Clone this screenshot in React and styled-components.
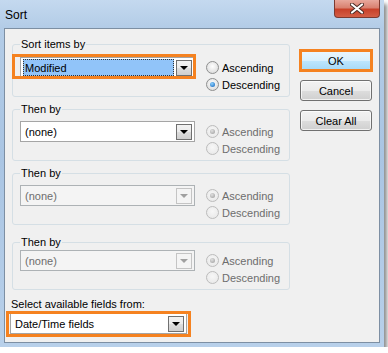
import React from "react";
import styled, { createGlobalStyle } from "styled-components";

const GlobalStyle = createGlobalStyle`
  html, body {
    margin: 0;
    padding: 0;
    background: #ffffff;
  }
  body {
    font-family: "Liberation Sans", Arial, sans-serif;
    font-size: 11px;
    color: #000;
  }
`;

const Window = styled.div`
  width: 384px;
  height: 347px;
  box-sizing: border-box;
  display: flex;
  flex-direction: column;
  padding: 0 4px 4px;
  background: linear-gradient(180deg, #c4d9ef 0%, #b3cce7 8%, #aac5e3 45%, #b8d0ea 100%);
  box-shadow: 3px 4px 4px rgba(0, 0, 0, 0.45);
`;

const TitleBar = styled.div`
  height: 28px;
  display: flex;
  justify-content: space-between;
  align-items: flex-start;
`;

const Title = styled.span`
  padding: 8px 0 0 1px;
  font-size: 12px;
`;

const CloseButton = styled.div`
  width: 46px;
  height: 18px;
  box-sizing: border-box;
  display: flex;
  align-items: center;
  justify-content: center;
  border: 1px solid #7c3a30;
  border-top: none;
  border-radius: 0 0 4px 4px;
  background: linear-gradient(180deg, #e8a89c 0%, #d98170 45%, #c8412a 55%, #d35e45 100%);
`;

const Client = styled.div`
  flex: 1;
  display: grid;
  grid-template-columns: 280px 72px;
  column-gap: 10px;
  align-items: start;
  padding: 8px 5px 0;
  background: #f0f0f0;
  border: 1px solid #7d8fa3;
`;

const LeftColumn = styled.div`
  display: flex;
  flex-direction: column;
  align-items: flex-start;
`;

const Group = styled.fieldset`
  align-self: stretch;
  margin: ${(p) => p.$gap || 0}px 0 0 2px;
  padding: ${(p) => p.$padTop}px 7px 3px;
  border: 1px solid #d5dfe5;
  border-radius: 3px;
  min-width: 0;
`;

const Legend = styled.legend`
  padding: 0 1px;
  line-height: 14px;
`;

const Row = styled.div`
  display: flex;
  align-items: flex-start;
`;

const Anchor = styled.div`
  position: relative;
`;

const Highlight = styled.div`
  position: absolute;
  top: -${(p) => p.$t}px;
  right: -${(p) => p.$r}px;
  bottom: -${(p) => p.$b}px;
  left: -${(p) => p.$l}px;
  border: 3px solid #f58220;
  pointer-events: none;
`;

const ComboBox = styled.div`
  width: ${(p) => p.$w}px;
  height: 21px;
  box-sizing: border-box;
  display: flex;
  align-items: center;
  padding: 1px 2px 1px 2px;
  background: ${(p) => (p.$disabled ? "#f4f4f4" : "#ffffff")};
  border: 1px solid ${(p) => (p.$disabled ? "#adb2b5" : "#a5a5a5")};
  color: ${(p) => (p.$disabled ? "#6d6d6d" : "#000")};
`;

const ComboText = styled.span`
  flex: 1;
  align-self: stretch;
  display: flex;
  align-items: center;
  padding-left: 2px;
  margin-right: 2px;
  background: ${(p) => (p.$selected ? "#91c4f9" : "transparent")};
  outline: ${(p) => (p.$selected ? "1px dotted #333" : "none")};
  outline-offset: -1px;
`;

const DropButton = styled.span`
  width: 16px;
  height: 16px;
  box-sizing: border-box;
  display: flex;
  align-items: center;
  justify-content: center;
  border: 1px solid ${(p) => (p.$disabled ? "#c4c4c4" : "#707070")};
  background: ${(p) =>
    p.$disabled
      ? "#f4f4f4"
      : "linear-gradient(180deg, #f2f2f2 0%, #ebebeb 50%, #dddddd 51%, #cfcfcf 100%)"};
`;

const Arrow = styled.span`
  width: 0;
  height: 0;
  border-left: 4px solid transparent;
  border-right: 4px solid transparent;
  border-top: 4px solid ${(p) => (p.$disabled ? "#a0a0a0" : "#000")};
`;

const RadioStack = styled.div`
  display: flex;
  flex-direction: column;
  margin: 2px 0 0 11px;
`;

const RadioRow = styled.label`
  height: 17px;
  display: flex;
  align-items: center;
  gap: 3px;
  color: ${(p) => (p.$disabled ? "#6d6d6d" : "#000")};
`;

const RadioDot = styled.span`
  width: 13px;
  height: 13px;
  box-sizing: border-box;
  border-radius: 50%;
  display: flex;
  align-items: center;
  justify-content: center;
  border: 1px solid ${(p) => (p.$disabled ? "#bcbcbc" : "#8e8f8f")};
  background: ${(p) =>
    p.$disabled
      ? "radial-gradient(circle at 50% 40%, #f7f7f7, #e6e6e6)"
      : "radial-gradient(circle at 50% 40%, #ffffff, #d4d4d4)"};

  &::after {
    content: "";
    display: ${(p) => (p.$checked ? "block" : "none")};
    width: 5px;
    height: 5px;
    border-radius: 50%;
    background: ${(p) =>
      p.$disabled
        ? "radial-gradient(circle at 40% 35%, #e0e0e0, #9a9a9a)"
        : "radial-gradient(circle at 40% 35%, #8fd2ff, #0b5fb8)"};
  }
`;

const FieldLabel = styled.div`
  margin: 7px 0 0 1px;
  line-height: 14px;
`;

const BottomCombo = styled.div`
  margin-top: 2px;
`;

const ButtonColumn = styled.div`
  display: flex;
  flex-direction: column;
  gap: 9px;
  padding-top: 13px;
`;

const Button = styled.div`
  height: 21px;
  box-sizing: border-box;
  display: flex;
  align-items: center;
  justify-content: center;
  border: 1px solid ${(p) => (p.$default ? "#3c7fb1" : "#707070")};
  border-radius: 3px;
  background: ${(p) =>
    p.$default
      ? "linear-gradient(180deg, #eaf6fd 0%, #d9f0fc 50%, #bee6fd 51%, #a7d9f5 100%)"
      : "linear-gradient(180deg, #f2f2f2 0%, #ebebeb 50%, #dddddd 51%, #cfcfcf 100%)"};
  box-shadow: inset 0 0 0 1px rgba(255, 255, 255, 0.7);
`;

function Combo({ value, width, disabled, selected }) {
  return (
    <ComboBox $w={width} $disabled={disabled}>
      <ComboText $selected={selected}>{value}</ComboText>
      <DropButton $disabled={disabled}>
        <Arrow $disabled={disabled} />
      </DropButton>
    </ComboBox>
  );
}

function Radios({ disabled, descending }) {
  return (
    <RadioStack>
      <RadioRow $disabled={disabled}>
        <RadioDot $disabled={disabled} $checked={!descending} />
        Ascending
      </RadioRow>
      <RadioRow $disabled={disabled}>
        <RadioDot $disabled={disabled} $checked={descending} />
        Descending
      </RadioRow>
    </RadioStack>
  );
}

const groups = [
  { label: "Then by", gap: 5, padTop: 5, combo: false },
  { label: "Then by", gap: 5, padTop: 5, combo: true },
  { label: "Then by", gap: 10, padTop: 1, combo: true },
];

export default function App() {
  return (
    <>
      <GlobalStyle />
      <Window>
        <TitleBar>
          <Title>Sort</Title>
          <CloseButton>
            <svg width="14" height="11" viewBox="0 0 14 11">
              <path
                d="M2 1.5 L12 9.5 M12 1.5 L2 9.5"
                stroke="#4a2a24"
                strokeWidth="4"
                strokeLinecap="round"
              />
              <path
                d="M2 1.5 L12 9.5 M12 1.5 L2 9.5"
                stroke="#ffffff"
                strokeWidth="2.2"
                strokeLinecap="round"
              />
            </svg>
          </CloseButton>
        </TitleBar>
        <Client>
          <LeftColumn>
            <Group $padTop={6}>
              <Legend>Sort items by</Legend>
              <Row>
                <Anchor>
                  <Combo value="Modified" width={175} selected />
                  <Highlight $t={3} $r={1} $b={1} $l={8} />
                </Anchor>
                <Radios descending />
              </Row>
            </Group>
            {groups.map((g, i) => (
              <Group key={i} $gap={g.gap} $padTop={g.padTop}>
                <Legend>{g.label}</Legend>
                <Row>
                  <Combo value="(none)" width={175} disabled={g.combo} />
                  <Radios disabled />
                </Row>
              </Group>
            ))}
            <FieldLabel>Select available fields from:</FieldLabel>
            <BottomCombo>
              <Anchor>
                <Combo value="Date/Time fields" width={177} />
                <Highlight $t={2} $r={4} $b={3} $l={4} />
              </Anchor>
            </BottomCombo>
          </LeftColumn>
          <ButtonColumn>
            <Anchor>
              <Button $default>OK</Button>
              <Highlight $t={1} $r={1} $b={1} $l={1} />
            </Anchor>
            <Button>Cancel</Button>
            <Button>Clear All</Button>
          </ButtonColumn>
        </Client>
      </Window>
    </>
  );
}
